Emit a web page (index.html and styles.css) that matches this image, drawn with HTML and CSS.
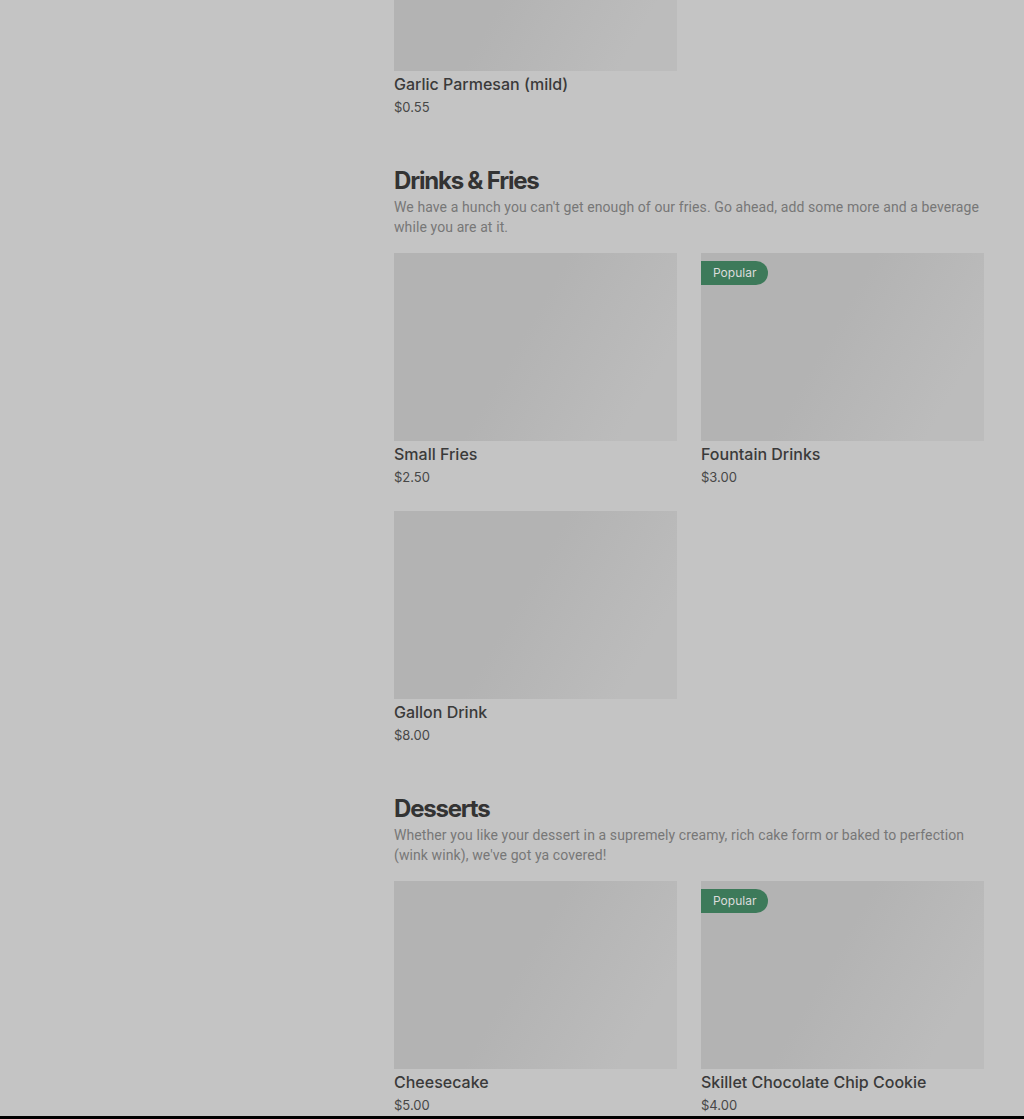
FILE: index.html
```html
<!DOCTYPE html>
<html lang="en">
<head>
    <meta charset="UTF-8">
    <title>Menu</title>
    <link rel="stylesheet" href="styles.css">
</head>
<body>
    <div class="menu">
        <section class="section section-first">
            <div class="grid">
                <div class="item">
                    <div class="thumb"></div>
                    <div class="item-name">Garlic Parmesan (mild)</div>
                    <div class="item-price">$0.55</div>
                </div>
            </div>
        </section>

        <section class="section">
            <h2>Drinks &amp; Fries</h2>
            <p class="desc">We have a hunch you can't get enough of our fries. Go ahead, add some more and a beverage while you are at it.</p>
            <div class="grid">
                <div class="item">
                    <div class="thumb"></div>
                    <div class="item-name">Small Fries</div>
                    <div class="item-price">$2.50</div>
                </div>
                <div class="item">
                    <div class="thumb"><span class="badge">Popular</span></div>
                    <div class="item-name">Fountain Drinks</div>
                    <div class="item-price">$3.00</div>
                </div>
                <div class="item">
                    <div class="thumb"></div>
                    <div class="item-name">Gallon Drink</div>
                    <div class="item-price">$8.00</div>
                </div>
            </div>
        </section>

        <section class="section">
            <h2>Desserts</h2>
            <p class="desc">Whether you like your dessert in a supremely creamy, rich cake form or baked to perfection (wink wink), we've got ya covered!</p>
            <div class="grid">
                <div class="item">
                    <div class="thumb"></div>
                    <div class="item-name">Cheesecake</div>
                    <div class="item-price">$5.00</div>
                </div>
                <div class="item">
                    <div class="thumb"><span class="badge">Popular</span></div>
                    <div class="item-name">Skillet Chocolate Chip Cookie</div>
                    <div class="item-price">$4.00</div>
                </div>
            </div>
        </section>
    </div>
</body>
</html>
```
FILE: styles.css
```css
html {
    background: #000;
}
body {
    margin: 0;
    height: 1116px;
    overflow: hidden;
    background: #c4c4c4;
    font-family: 'Inter', 'Liberation Sans', sans-serif;
}
.menu {
    width: 590px;
    margin-left: 394px;
    margin-top: -117px;
}
.section {
    padding-top: 46px;
}
.section-first {
    padding-top: 0;
}
h2 {
    margin: 0;
    font-size: 24px;
    line-height: 36px;
    font-weight: 700;
    letter-spacing: -1.2px;
    color: #333;
}
.desc {
    margin: -2px 0 16px 0;
    font-family: 'Roboto', 'Liberation Sans', sans-serif;
    font-size: 14px;
    line-height: 20px;
    letter-spacing: 0.1px;
    color: #777;
}
.grid {
    display: grid;
    grid-template-columns: 283px 283px;
    column-gap: 24px;
    row-gap: 24px;
}
.thumb {
    position: relative;
    height: 188px;
    background: linear-gradient(120deg, #b3b3b3 45%, #bcbcbc 85%);
}
.badge {
    position: absolute;
    left: 0;
    top: 8px;
    height: 24px;
    line-height: 24px;
    padding: 0 12px;
    font-size: 12px;
    color: #dcdcdc;
    background: #3d7a5a;
    border-radius: 0 12px 12px 0;
}
.item-name {
    margin-top: 3px;
    font-size: 16px;
    line-height: 20px;
    font-weight: 500;
    color: #3a3a3a;
}
.item-price {
    margin-top: 3px;
    font-size: 13px;
    line-height: 20px;
    color: #474747;
}
```
